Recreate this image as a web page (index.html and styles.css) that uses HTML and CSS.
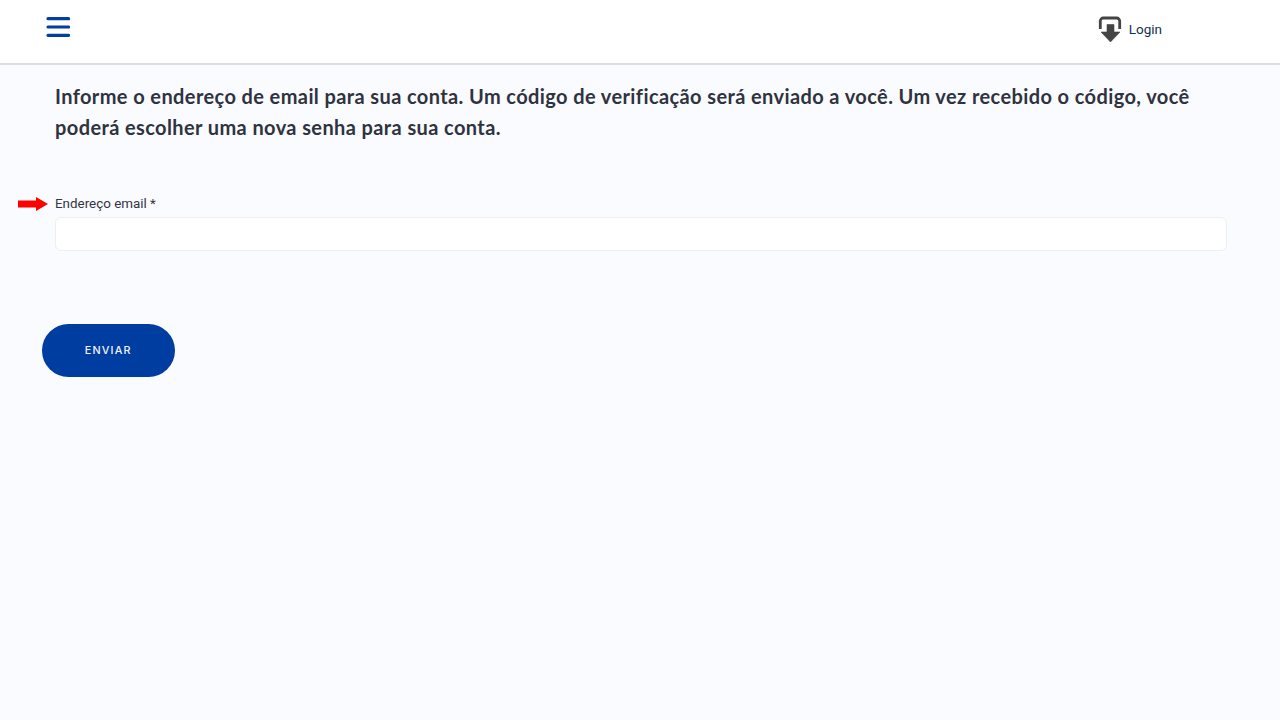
FILE: index.html
```html
<!DOCTYPE html>
<html lang="pt">
<head>
<meta charset="utf-8">
<title>Recuperar senha</title>
<link rel="stylesheet" href="styles.css">
</head>
<body>
<header class="topbar">
  <button class="menu" aria-label="Menu">
    <svg width="24" height="20" viewBox="0 0 24 20"><path d="M2 1.700h20.500M2 10h20.500M2 18.300h20.500" stroke="#003da5" stroke-width="3.200" stroke-linecap="round" fill="none"/></svg>
  </button>
  <a class="login">
    <svg width="24" height="27" viewBox="0 0 24 27"><path d="M2.300 13V5a3 3 0 0 1 3-3h13.400a3 3 0 0 1 3 3v8" fill="none" stroke="#444" stroke-width="2.800"/><path d="M9 8.500h7V16h6L12.500 26 3 16h6z" fill="#444" stroke="#444" stroke-width=".6" stroke-linejoin="round"/></svg>
    <span>Login</span>
  </a>
</header>
<main class="content">
  <p class="intro">Informe o endereço de email para sua conta. Um código de verificação será enviado a você. Um vez recebido o código, você poderá escolher uma nova senha para sua conta.</p>
  <div class="field">
    <svg class="pointer" width="30" height="14" viewBox="0 0 30 14"><path d="M0 3.500h18V0l12 7-12 7v-3.500H0z" fill="#f00"/></svg>
    <label class="label" for="email">Endereço email *</label>
    <input class="input" id="email" type="text">
  </div>
  <button class="submit">ENVIAR</button>
</main>
</body>
</html>
```
FILE: styles.css
```css
* { box-sizing: border-box; }
html, body { height: 100%; }
body {
  margin: 0;
  background: #fafbff;
  font-family: Roboto, "Liberation Sans", sans-serif;
  color: #2b2f36;
  overflow: hidden;
}
.topbar {
  height: 65px;
  background: #fff;
  border-bottom: 2px solid #dcdde0;
  display: flex;
  justify-content: space-between;
  align-items: flex-start;
  padding: 0 118px 0 46px;
}
.menu {
  border: 0;
  background: none;
  padding: 0;
  margin-top: 17px;
  display: flex;
}
.login {
  display: flex;
  align-items: center;
  gap: 7px;
  margin-top: 16px;
  font-size: 13.500px;
  line-height: 25px;
  color: #12304e;
}
.content { padding: 16px 53px 0 55px; }
.intro {
  margin: 0;
  font-family: Lato, sans-serif;
  font-weight: 700;
  font-size: 20px;
  letter-spacing: 0.395px;
  line-height: 31px;
  color: #2f3340;
}
.field {
  position: relative;
  margin-top: 50px;
}
.pointer {
  position: absolute;
  left: -37px;
  top: 4px;
}
.label {
  display: block;
  font-size: 13.400px;
  line-height: 22px;
  margin-bottom: 2px;
  color: #33363e;
}
.input {
  display: block;
  width: 100%;
  height: 34px;
  background: #fff;
  border: 1px solid #eeeff2;
  border-radius: 6px;
}
.submit {
  display: block;
  margin: 73px 0 0 -13px;
  width: 132.500px;
  height: 53px;
  padding: 0;
  border: 0;
  border-radius: 27px;
  background: #003da0;
  color: #f2f4fa;
  font-family: Inter, sans-serif;
  font-size: 10.800px;
  font-weight: 500;
  letter-spacing: 1.200px;
}
```
